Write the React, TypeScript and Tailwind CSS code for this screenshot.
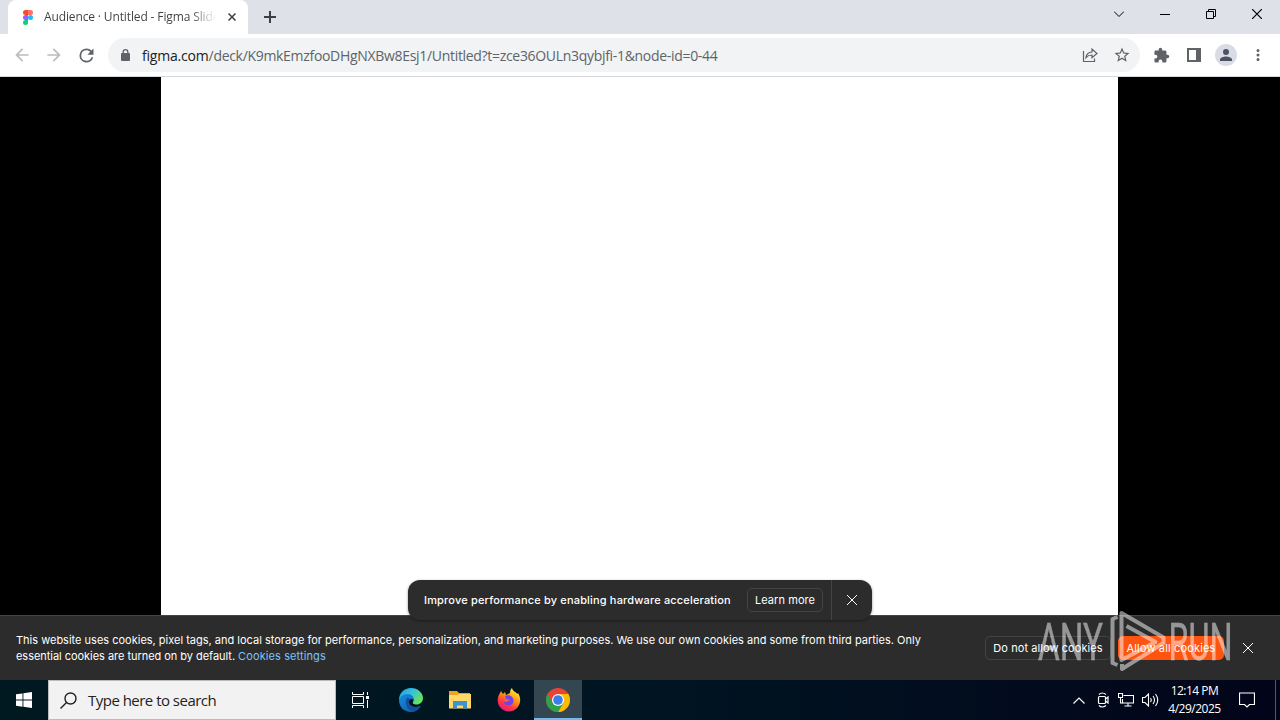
import type { ReactNode } from 'react';

const strokeProps = {
  fill: 'none',
  stroke: 'currentColor',
} as const;

const FigmaLogo = () => (
  <svg width="10" height="15" viewBox="0 0 10 15" className="shrink-0">
    <path d="M2.5 0H5v5H2.5a2.5 2.5 0 0 1 0-5Z" fill="#f24e1e" />
    <path d="M5 0h2.5a2.5 2.5 0 0 1 0 5H5Z" fill="#ff7262" />
    <path d="M2.5 5H5v5H2.5a2.5 2.5 0 0 1 0-5Z" fill="#a259ff" />
    <circle cx="7.5" cy="7.5" r="2.5" fill="#1abcfe" />
    <path d="M2.5 10H5v2.5A2.5 2.5 0 1 1 2.5 10Z" fill="#0acf83" />
  </svg>
);

const TabStrip = () => (
  <div className="flex h-[34px] bg-[#dee1e8] pl-2">
    <div className="flex h-full w-60 items-center rounded-t-lg bg-white pl-[15px]">
      <FigmaLogo />
      <p className="ml-[11px] w-[172px] overflow-hidden whitespace-nowrap bg-gradient-to-r from-[#3c4043] from-85% to-transparent bg-clip-text text-[12px] tracking-[-0.13px] text-transparent">
        Audience · Untitled - Figma Slides
      </p>
      <svg width="8" height="8" viewBox="0 0 8 8" className="ml-[12px] text-[#3c4043]" {...strokeProps} strokeWidth="1.5">
        <path d="M.5.5l7 7M7.5.5l-7 7" />
      </svg>
    </div>
    <svg width="12" height="12" viewBox="0 0 12 12" className="mt-[11px] ml-4 text-[#3c4043]" {...strokeProps} strokeWidth="2">
      <path d="M6 0v12M0 6h12" />
    </svg>
    <div className="mt-2 mr-[18px] ml-auto flex h-3 items-center text-black">
      <svg width="10" height="6" viewBox="0 0 10 6" className="mr-[36px]" {...strokeProps}>
        <path d="M0 .5l5 5 5-5" />
      </svg>
      <svg width="10" height="1" viewBox="0 0 10 1" className="mr-[36px]">
        <path d="M0 0h10v1H0z" fill="#000" />
      </svg>
      <svg width="10" height="10" viewBox="0 0 10 10" className="mr-[36px]" {...strokeProps}>
        <path d="M.5 2.5h7v7h-7zM2.5 2.5v-2h7v7h-2" />
      </svg>
      <svg width="10" height="10" viewBox="0 0 10 10" {...strokeProps} strokeWidth="1.2">
        <path d="M0 0l10 10M10 0L0 10" />
      </svg>
    </div>
  </div>
);

const ToolIcon = ({ d, size = 18, className = '' }: { d: string; size?: number; className?: string }) => (
  <svg width={size} height={size} viewBox="0 0 24 24" fill="currentColor" className={`shrink-0 ${className}`}>
    <path d={d} />
  </svg>
);

const Toolbar = () => (
  <div className="flex h-[43px] items-center border-b border-[#d5d7da] bg-white pr-[13px] pl-3 text-[#5f6368]">
    <ToolIcon size={20} className="text-[#babcbe]" d="M20 11H7.83l5.59-5.59L12 4l-8 8 8 8 1.41-1.41L7.83 13H20v-2z" />
    <ToolIcon size={20} className="ml-3 text-[#babcbe]" d="M12 4l-1.41 1.41L16.17 11H4v2h12.17l-5.58 5.59L12 20l8-8z" />
    <ToolIcon
      size={21}
      className="ml-3"
      d="M17.65 6.35A7.96 7.96 0 0 0 12 4a8 8 0 1 0 7.73 10h-2.08A6 6 0 1 1 12 6c1.66 0 3.14.69 4.22 1.78L13 11h7V4l-2.35 2.35z"
    />
    <div className="ml-[11px] flex h-[34px] w-[1032px] items-center rounded-full bg-[#f1f3f4] pr-[9px] pl-[13px]">
      <svg width="9" height="12" viewBox="0 0 9 12" fill="currentColor" className="mr-3 shrink-0">
        <path d="M1.5 4V3a3 3 0 0 1 6 0v1H8a1 1 0 0 1 1 1v6a1 1 0 0 1-1 1H1a1 1 0 0 1-1-1V5a1 1 0 0 1 1-1zm1.3 0h3.4V3a1.7 1.7 0 0 0-3.4 0z" />
      </svg>
      <p className="text-[14px] tracking-[-0.31px] whitespace-nowrap">
        <span className="tracking-[-0.2px] text-[#202124]">figma.com</span>
        /deck/K9mkEmzfooDHgNXBw8Esj1/Untitled?t=zce36OULn3qybjfi-1&amp;node-id=0-44
      </p>
      <svg width="16" height="16" viewBox="0 0 16 16" className="ml-auto shrink-0" {...strokeProps} strokeWidth="1.2">
        <path d="M1.5 4v10.5h11V11.5" />
        <path d="M4 10.5c.4-3.600 2.500-5.300 6-5.500V2l5 4.500-5 4.300V8c-2.600 0-4.500.7-6 2.500z" />
      </svg>
      <ToolIcon
        className="ml-[15px]"
        d="M22 9.24l-7.19-.62L12 2 9.19 8.630 2 9.240l5.460 4.730L5.820 21 12 17.270 18.180 21l-1.630-7.030L22 9.240zM12 15.400l-3.760 2.270 1-4.280-3.320-2.880 4.380-.380L12 6.100l1.710 4.040 4.380.380-3.320 2.880 1 4.280L12 15.400z"
      />
    </div>
    <ToolIcon
      size={17}
      className="ml-[13px]"
      d="M20.5 11H19V7a2 2 0 0 0-2-2h-4V3.500a2.500 2.500 0 0 0-5 0V5H4a2 2 0 0 0-2 2v3.800h1.500a2.700 2.700 0 0 1 0 5.400H2V20a2 2 0 0 0 2 2h3.800v-1.500a2.700 2.700 0 0 1 5.400 0V22H17a2 2 0 0 0 2-2v-4h1.500a2.500 2.500 0 0 0 0-5z"
    />
    <svg width="14" height="14" viewBox="0 0 14 14" className="ml-[17px] shrink-0">
      <path d="M0 0h14v14H0zM2 2v10h7V2z" fill="currentColor" fillRule="evenodd" />
    </svg>
    <div className="ml-[14px] flex size-[22px] shrink-0 items-center justify-center rounded-full bg-[#dadce5] text-[#4b5263]">
      <ToolIcon d="M12 12a4 4 0 1 0 0-8 4 4 0 0 0 0 8zm0 2c-2.670 0-8 1.340-8 4v2h16v-2c0-2.660-5.330-4-8-4z" />
    </div>
    <ToolIcon className="ml-[12px]" d="M12 8a2 2 0 1 0 0-4 2 2 0 0 0 0 4zm0 2a2 2 0 1 0 0 4 2 2 0 0 0 0-4zm0 6a2 2 0 1 0 0 4 2 2 0 0 0 0-4z" />
  </div>
);

const CloseIcon = () => (
  <svg width="10" height="10" viewBox="0 0 10 10" className="shrink-0" {...strokeProps}>
    <path d="M0 0l10 10M10 0L0 10" />
  </svg>
);

const OutlineButton = ({ children, className = '' }: { children: ReactNode; className?: string }) => (
  <button className={`h-6 shrink-0 rounded-[5px] border border-[#444] text-[11px] tracking-[0.08px] whitespace-nowrap ${className}`}>
    {children}
  </button>
);

const PerformanceToast = () => (
  <div className="absolute top-[503px] left-[408px] flex h-10 w-[464px] items-center rounded-xl bg-[#2c2c2c] pl-4 font-[Inter,sans-serif] text-[11px] text-white shadow-[0_1px_3px_rgba(0,0,0,0.4)]">
    <p className="w-[323px] font-medium tracking-[0.17px] whitespace-nowrap">Improve performance by enabling hardware acceleration</p>
    <OutlineButton className="w-[76px]">Learn more</OutlineButton>
    <div className="ml-2 flex h-full w-[41px] items-center justify-center border-l border-[#444]">
      <CloseIcon />
    </div>
  </div>
);

const CookieBanner = () => (
  <div className="flex h-[65px] items-center border-t border-[#444] bg-[#2c2c2c] pr-[27px] pl-4 font-[Inter,sans-serif] text-[11px] leading-4 text-white">
    <p className="whitespace-nowrap">
      This website uses cookies, pixel tags, and local storage for performance, personalization, and marketing purposes. We use our own cookies and some from third parties. Only
      <br />
      <span className="tracking-[-0.04px]">essential cookies are turned on by default.</span>{' '}
      <a className="tracking-[0.1px] text-[#7cc4f8]">Cookies settings</a>
    </p>
    <OutlineButton className="ml-auto w-[126px]">Do not allow cookies</OutlineButton>
    <button className="ml-[7px] h-6 w-[106px] shrink-0 rounded-[5px] bg-[#ff5310] tracking-[0.15px] whitespace-nowrap">
      Allow all cookies
    </button>
    <div className="ml-[19px]">
      <CloseIcon />
    </div>
  </div>
);

const Watermark = () => (
  <svg width="210" height="74" viewBox="1033 603 210 74" className="absolute top-[603px] left-[1033px] overflow-visible opacity-50">
    <g fill="#fff" stroke="#fff" strokeWidth=".5" fontFamily="Roboto, sans-serif" fontSize="52">
      <text x="1038" y="660" textLength="65" lengthAdjust="spacingAndGlyphs">ANY</text>
      <text x="1168.500" y="660" textLength="64" lengthAdjust="spacingAndGlyphs">RUN</text>
    </g>
    <g fill="none" stroke="#fff" strokeWidth="4" strokeLinejoin="round">
      <path d="M1117.500 617l-5 2v44l5 2" />
      <path d="M1126.500 626l29 16-34 18v-47l42 24.500v5.500l-41.500 26v-5" />
    </g>
  </svg>
);

const EdgeIcon = () => (
  <svg width="24" height="24" viewBox="0 0 24 24">
    <defs>
      <linearGradient id="edgeTop" x1="0" y1="0" x2="1" y2=".6">
        <stop offset="0" stopColor="#1b9de2" />
        <stop offset=".5" stopColor="#35c1dc" />
        <stop offset="1" stopColor="#6be25b" />
      </linearGradient>
      <linearGradient id="edgeLow" x1="0" y1="0" x2="1" y2="1">
        <stop offset="0" stopColor="#198be0" />
        <stop offset="1" stopColor="#0c59a4" />
      </linearGradient>
    </defs>
    <path d="M0 12C0 5 5 0 12 0c7 0 12 5 12 10 0 4-3 6.500-6.500 6.500-2.500 0-4.500-1-3.500-2.500 2-3-1-6-4-6-5 0-8 3-10 4z" fill="url(#edgeTop)" />
    <path d="M0 12c1-4 5-6 8.500-6 4 0 6.500 2.500 6 5.500-2-1.500-5 0-4.500 3 .5 4 6 6 11.500 3.500C19.500 22 16 24 12 24 5 24 0 19 0 12z" fill="url(#edgeLow)" />
    <path d="M8.500 9.500C5 13 7 21 13.500 23.800 17 23.500 20 21.500 21.700 18c-5 2.500-11 .5-11.700-3.500-.4-2 .8-3 1.600-3.500z" fill="#134f9b" />
  </svg>
);

const ExplorerIcon = () => (
  <svg width="22" height="18" viewBox="0 0 22 18">
    <path d="M0 0h8l2 2h11v15H0z" fill="#e9a51c" />
    <path d="M0 4h8l2-1h12v14.500H0z" fill="#ffd868" />
    <path d="M4 17.500v-7.500h14v7.500h-4v-3H8v3z" fill="#3a94d0" />
  </svg>
);

const FirefoxIcon = () => (
  <svg width="24" height="24" viewBox="0 0 24 24">
    <defs>
      <linearGradient id="fox" x1=".8" y1="0" x2=".2" y2="1">
        <stop offset="0" stopColor="#fff44f" />
        <stop offset=".4" stopColor="#ff980e" />
        <stop offset=".7" stopColor="#ff3647" />
        <stop offset="1" stopColor="#e31587" />
      </linearGradient>
    </defs>
    <path d="M3 5l1-2 2 3 2-2 1 3 4-2c0-2 .5-4 2-5 .5 3 4 4 5.500 6l.5-1C23 8 23.500 11 23 14c-1 5.500-5.500 9.500-11 9.500S1 19 .7 13C.6 9.500 1.600 7 3 5z" fill="url(#fox)" />
    <path d="M8 8c3-2 8-.5 8.500 4 .3 3.500-2 5.500-5 5.500-2.500 0-4.500-1.500-4.500-4 1 1 3 .8 4-.5l2-1-4-1z" fill="#7542e5" />
  </svg>
);

const ChromeIcon = () => (
  <svg width="24" height="24" viewBox="0 0 24 24">
    <circle cx="12" cy="12" r="12" fill="#ea4335" />
    <path d="M12 6h10.390A12 12 0 0 1 12 24l5.200-9z" fill="#fbbc04" />
    <path d="M1.610 6A12 12 0 0 0 12 24l5.200-9H6.800z" fill="#2da24c" />
    <circle cx="12" cy="12" r="6" fill="#fff" />
    <circle cx="12" cy="12" r="4.800" fill="#3b7ded" />
  </svg>
);

const TaskbarSlot = ({ children, active = false }: { children: ReactNode; active?: boolean }) => (
  <div
    className={`flex h-10 w-12 items-center justify-center ${active ? 'border-b-2 border-[#76b9ed] bg-[#344750] pt-0.5' : ''}`}
  >
    {children}
  </div>
);

const Taskbar = () => (
  <div className="flex h-10 items-center bg-gradient-to-r from-[#001820] via-[#001522] to-[#020519] text-white">
    <TaskbarSlot>
      <svg width="16" height="16" viewBox="0 0 16 16" fill="#fff">
        <path d="M0 2.300L6.500 1.400v6.200H0zM7.400 1.200L16 0v7.600H7.400zM0 8.500h6.500v6.200L0 13.800zM7.400 8.500H16V16l-8.600-1.200z" />
      </svg>
    </TaskbarSlot>
    <div className="flex h-10 w-72 items-center border border-[#b8bcbe] bg-[#f2f2f2] pl-[11px] text-[#222]">
      <svg width="17" height="17" viewBox="0 0 17 17" {...strokeProps} strokeWidth="1.4">
        <circle cx="10.5" cy="6.5" r="5.5" />
        <path d="M6.500 10.500l-6 6" />
      </svg>
      <p className="ml-[11px] text-[15px] tracking-[-0.52px]">Type here to search</p>
    </div>
    <TaskbarSlot>
      <svg width="17" height="16" viewBox="0 0 17 16" {...strokeProps}>
        <path d="M.5 0v2.500h11V0M.5 16v-2.500h11V16M.5 4.500h11v7H.5zM15.500 0v3M15.500 8v8" />
        <path d="M14 4h3v3h-3z" fill="#fff" stroke="none" />
      </svg>
    </TaskbarSlot>
    <div className="ml-[3px] flex gap-px">
      <TaskbarSlot>
        <EdgeIcon />
      </TaskbarSlot>
      <TaskbarSlot>
        <ExplorerIcon />
      </TaskbarSlot>
      <TaskbarSlot>
        <FirefoxIcon />
      </TaskbarSlot>
      <TaskbarSlot active>
        <ChromeIcon />
      </TaskbarSlot>
    </div>
    <div className="ml-auto flex h-full items-center">
      <svg width="12" height="7" viewBox="0 0 12 7" {...strokeProps} strokeWidth="1.2">
        <path d="M.5 6.500L6 1l5.500 5.500" />
      </svg>
      <svg width="12" height="16" viewBox="0 0 12 16" className="ml-[12px]" {...strokeProps} strokeWidth="1.2">
        <path d="M2 2.500q3-3 7 0M2 13.500q3 3 7 0" />
        <rect x="1.500" y="4.500" width="7" height="7" rx="1" />
        <path d="M8.500 7l2.500-2v6L8.500 9" />
      </svg>
      <svg width="16" height="14" viewBox="0 0 16 14" className="ml-[9px]" {...strokeProps} strokeWidth="1.1">
        <path d="M5.500 2.500h10v7.500H4.500V6M10 10v3M6.500 13h7" />
        <path d="M.5.5h4v4h-4zM2.500 4.500V10h2" />
      </svg>
      <svg width="17" height="14" viewBox="0 0 17 14" className="ml-2" {...strokeProps} strokeWidth="1.1">
        <path d="M.5 4.500h2.500l3.500-3.500v12L3 9.500H.5zM8.500 5q1.500 2 0 4M11 3q3 4 0 8M13.500 1q4.500 6 0 12" />
      </svg>
      <div className="ml-[9px] w-[53px] text-center text-[12px] leading-[18px] tracking-[-0.5px] whitespace-nowrap">
        <p>12:14 PM</p>
        <p>4/29/2025</p>
      </div>
      <svg width="16" height="16" viewBox="0 0 16 16" className="ml-[18px]" {...strokeProps} strokeWidth="1.2">
        <path d="M.5 1h15v11.500h-5L8 15l-2.500-2.500h-5z" />
      </svg>
      <div className="ml-5 h-full w-px bg-[#555a68]" />
      <div className="w-1" />
    </div>
  </div>
);

const App = () => (
  <div className="relative flex h-[720px] w-[1280px] flex-col overflow-hidden font-['Open_Sans',sans-serif]">
    <TabStrip />
    <Toolbar />
    <main className="relative flex flex-1 flex-col bg-black">
      <div className="ml-[161px] w-[957px] flex-1 bg-white" />
      <CookieBanner />
      <PerformanceToast />
    </main>
    <Taskbar />
    <Watermark />
  </div>
);

export default App;
